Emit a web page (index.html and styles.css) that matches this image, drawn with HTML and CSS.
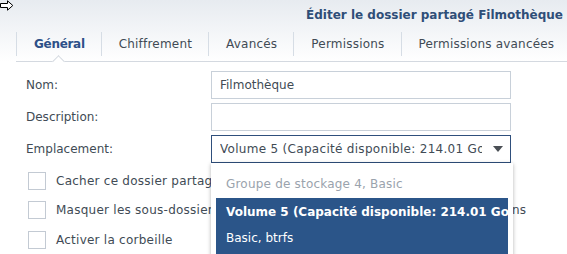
FILE: index.html
```html
<!DOCTYPE html>
<html lang="fr">
<head>
<meta charset="utf-8">
<link rel="stylesheet" href="styles.css">
</head>
<body>
<div class="window">
  <svg class="cursor" width="14" height="12" viewBox="0 0 14 12"><path d="M0.5 3.5 H7.5 V0.8 L12.8 5.5 L7.5 10.2 V7.5 H0.5 Z" fill="#fff" stroke="#000" stroke-width="1"/></svg>
  <div class="header">
    <div class="title">Éditer le dossier partagé Filmothèque</div>
  </div>
  <div class="tabs">
    <div class="tab active">Général</div>
    <div class="tab">Chiffrement</div>
    <div class="tab">Avancés</div>
    <div class="tab">Permissions</div>
    <div class="tab">Permissions avancées</div>
  </div>
  <div class="form">
    <div class="row">
      <label class="label">Nom:</label>
      <div class="field">Filmothèque</div>
    </div>
    <div class="row">
      <label class="label">Description:</label>
      <div class="field"></div>
    </div>
    <div class="row">
      <label class="label">Emplacement:</label>
      <div class="field select">
        <span class="sel-text">Volume 5 (Capacité disponible: 214.01 Go)</span>
        <span class="caret"></span>
      </div>
    </div>
    <div class="checks">
      <div class="check"><span class="box"></span><span class="ctext">Cacher ce dossier partagé dans « Mes emplacements réseau »</span></div>
      <div class="check"><span class="box"></span><span class="ctext">Masquer les sous-dossiers et les fichiers aux utilisateurs sans autorisations</span></div>
      <div class="check"><span class="box"></span><span class="ctext">Activer la corbeille</span></div>
    </div>
    <div class="dropdown">
      <div class="group">Groupe de stockage 4, Basic</div>
      <div class="option selected">
        <div class="opt-main">Volume 5 (Capacité disponible: 214.01 Go)</div>
        <div class="opt-sub">Basic, btrfs</div>
      </div>
    </div>
  </div>
</div>
</body>
</html>
```

FILE: styles.css
```css
html, body {
  margin: 0;
  padding: 0;
  background: #fff;
  overflow: hidden;
}
body {
  font-family: "DejaVu Sans", Verdana, sans-serif;
  font-size: 12px;
  color: #414b55;
}
.window {
  position: relative;
  width: 567px;
  height: 254px;
  overflow: hidden;
  background: linear-gradient(to bottom, #e7ebf0 0px, #ffffff 62px);
}
.cursor {
  position: absolute;
  left: 0;
  top: 0;
}
.header {
  height: 32px;
  display: flex;
  justify-content: flex-end;
  align-items: center;
  padding-right: 4px;
}
.title {
  font-weight: bold;
  font-size: 12px;
  color: #2f4e78;
  margin-top: -2px;
  white-space: nowrap;
}
.tabs {
  display: flex;
  margin-left: 16px;
  height: 29px;
  border-bottom: 1px solid #d4d9e0;
}
.tab {
  position: relative;
  padding: 0 16px 0 17px;
  height: 24px;
  line-height: 24px;
  border-left: 1px solid #d6dde5;
  color: #414b55;
  font-size: 12px;
  letter-spacing: 0.2px;
  white-space: nowrap;
  flex: none;
}
.tab.active {
  color: #2d5088;
  font-weight: bold;
  letter-spacing: -0.3px;
}
.tab.active::after {
  content: "";
  position: absolute;
  left: 50%;
  bottom: -10px;
  width: 8px;
  height: 8px;
  margin-left: -5px;
  background: #fff;
  border-left: 1px solid #d4d9e0;
  border-top: 1px solid #d4d9e0;
  transform: rotate(45deg);
}
.form {
  position: relative;
  padding: 9px 0 0 26px;
}
.row {
  display: grid;
  grid-template-columns: 185px 300px;
  align-items: center;
  margin-bottom: 4px;
}
.label {
  color: #414b55;
}
.field {
  box-sizing: border-box;
  height: 28px;
  border: 1px solid #c8d0d9;
  padding: 0 8px;
  line-height: 26px;
  color: #414b55;
  background: #fff;
  white-space: nowrap;
  overflow: hidden;
}
.field.select {
  border-color: #2f4f7c;
  display: flex;
  align-items: center;
  padding-right: 7px;
}
.sel-text {
  flex: 1;
  overflow: hidden;
  white-space: nowrap;
  letter-spacing: 0.3px;
}
.caret {
  width: 0;
  height: 0;
  border-left: 5px solid transparent;
  border-right: 5px solid transparent;
  border-top: 6px solid #4a4f55;
  margin-left: 11px;
}
.checks {
  margin-top: -1px;
}
.check {
  display: flex;
  align-items: center;
  height: 29.5px;
  margin-left: 2px;
  white-space: nowrap;
}
.box {
  box-sizing: border-box;
  width: 18px;
  height: 18px;
  border: 1px solid #c3cad3;
  background: #fff;
  flex: none;
}
.ctext {
  margin-left: 10px;
  letter-spacing: 0.25px;
}
.dropdown {
  position: absolute;
  left: 211px;
  top: 101px;
  width: 302px;
  height: 120px;
  background: #fff;
  box-shadow: 0 1px 4px rgba(0, 0, 0, 0.3);
  padding: 0 5px;
  box-sizing: border-box;
}
.group {
  padding: 0 10px;
  height: 35px;
  line-height: 42px;
  color: #9aa3ad;
  white-space: nowrap;
  letter-spacing: 0.2px;
}
.option {
  background: #2b5589;
  color: #fff;
  padding: 6px 10px 9px;
  white-space: nowrap;
  overflow: hidden;
}
.opt-main {
  font-weight: bold;
  height: 16px;
  line-height: 16px;
}
.opt-sub {
  margin-top: 10px;
  line-height: 16px;
}
```
